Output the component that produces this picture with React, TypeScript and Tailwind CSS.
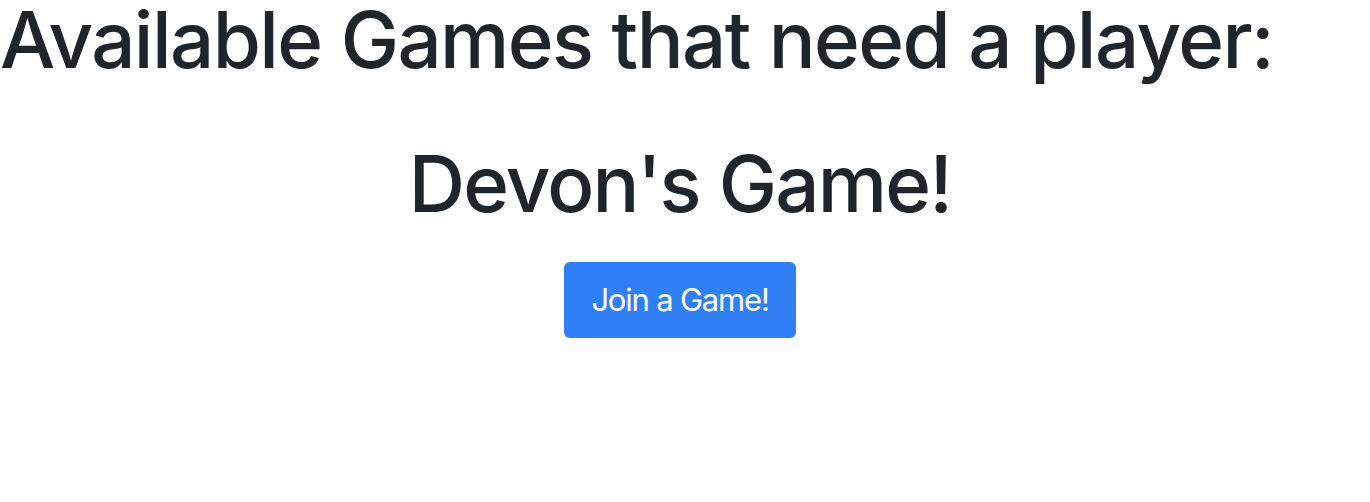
export default function App() {
  return (
    <div className="w-[1370px] h-[502px] bg-white text-[#212529]" style={{ fontFamily: "Inter, 'Noto Sans', sans-serif" }}>
      <h1 className="text-[78px] leading-none font-medium tracking-[-1.6px] pt-px">Available Games that need a player:</h1>
      <div className="flex flex-col items-center pr-[10px] mt-[66px]">
        <h2 className="text-[78px] leading-none font-medium tracking-[-1.8px]">Devon's Game!</h2>
        <button className="mt-[39px] w-[232px] h-[76px] rounded-[6px] bg-[#2f7ff6] text-white text-[31px] tracking-[-1.2px] flex items-center justify-center">
          Join a Game!
        </button>
      </div>
    </div>
  );
}
